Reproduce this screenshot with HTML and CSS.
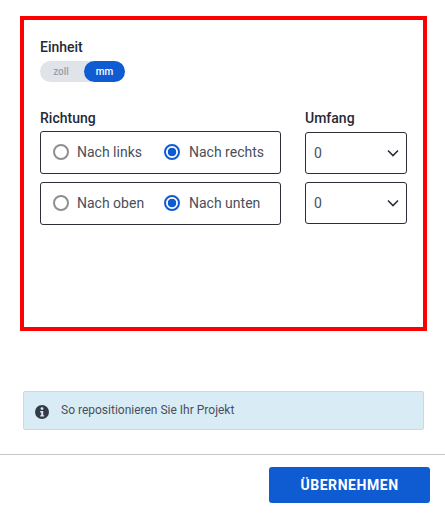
FILE: index.html
```html
<!DOCTYPE html>

<html lang="de">

<head>
  <meta charset="UTF-8">
  <meta name="viewport" content="width=device-width, initial-scale=1">

  <title>Repositionieren</title>

  <link rel="stylesheet" href="styles.css">
</head>

<body>
  <div class="panel">
    <div class="field-label">Einheit</div>
    <div class="unit-toggle">
      <span class="unit">zoll</span>
      <span class="unit active">mm</span>
    </div>

    <div class="columns">
      <div class="direction">
        <div class="field-label">Richtung</div>
        <div class="radio-box">
          <span class="radio"><span class="dot"></span>Nach links</span>
          <span class="radio checked"><span class="dot"></span>Nach rechts</span>
        </div>
        <div class="radio-box">
          <span class="radio"><span class="dot"></span>Nach oben</span>
          <span class="radio checked"><span class="dot"></span>Nach unten</span>
        </div>
      </div>
      <div class="extent">
        <div class="field-label">Umfang</div>
        <div class="select">0
          <svg width="12" height="8" viewBox="0 0 12 8"><path d="M1 1.5l5 5 5-5" fill="none" stroke="#2b2f38" stroke-width="1.6"/></svg>
        </div>
        <div class="select">0
          <svg width="12" height="8" viewBox="0 0 12 8"><path d="M1 1.5l5 5 5-5" fill="none" stroke="#2b2f38" stroke-width="1.6"/></svg>
        </div>
      </div>
    </div>
  </div>

  <div class="info">
    <svg class="info-icon" width="14" height="14" viewBox="0 0 14 14">
      <circle cx="7" cy="7" r="7" fill="#343a46"/>
      <circle cx="7" cy="3.6" r="1.4" fill="#d9ecf5"/>
      <path d="M5.2 6h3v4.2h1v1.4H5.2v-1.4h1V7.4h-1z" fill="#d9ecf5"/>
    </svg>
    <span class="info-text">So repositionieren Sie Ihr Projekt</span>
  </div>

  <div class="footer">
    <button type="button" class="apply">ÜBERNEHMEN</button>
  </div>
</body>

</html>
```

FILE: styles.css
```css
html {
  margin: 0;
  padding: 0;
}

body {
  margin: 0;
  background: #fff;
  font-family: Roboto, sans-serif;
  color: #2b2f38;
}

.panel {
  box-sizing: border-box;
  width: 407px;
  height: 315px;
  margin: 16px 0 0 20px;
  padding: 19px 16px;
  border: 4px solid #ff0000;
}

.field-label {
  font-size: 14px;
  font-weight: 500;
  line-height: 16px;
  color: #252a36;
}

.unit-toggle {
  display: flex;
  width: 85px;
  height: 21px;
  margin-top: 6px;
  border-radius: 11px;
  background: #e0e3e8;
}

.unit {
  flex: 1;
  padding-right: 2px;
  font-size: 10px;
  font-weight: 500;
  line-height: 21px;
  text-align: center;
  color: #9a9fa9;
}

.unit.active {
  flex: 0 0 41px;
  padding-right: 0;
  border-radius: 11px;
  background: #0f5bd2;
  color: #fff;
}

.columns {
  display: flex;
  gap: 24px;
  margin-top: 28px;
}

.direction {
  width: 241px;
}

.extent {
  width: 102px;
}

.radio-box {
  box-sizing: border-box;
  display: flex;
  align-items: center;
  height: 43px;
  margin-top: 5px;
  padding: 0 0 1px 12px;
  border: 1px solid #2b2f38;
  border-radius: 3px;
}

.radio-box + .radio-box {
  margin-top: 8px;
}

.radio {
  display: flex;
  align-items: center;
  gap: 8px;
  width: 111px;
  font-size: 14px;
  color: #4a4f5a;
}

.radio.checked {
  gap: 9px;
}

.dot {
  box-sizing: border-box;
  width: 16px;
  height: 16px;
  border: 2px solid #8f8f8f;
  border-radius: 50%;
}

.radio.checked .dot {
  border-color: #0f5bd2;
  background: radial-gradient(circle, #0f5bd2 0 4px, #fff 4.6px);
}

.select {
  box-sizing: border-box;
  display: flex;
  align-items: center;
  justify-content: space-between;
  height: 42px;
  margin-top: 6px;
  padding: 0 7px 1px 8px;
  border: 1px solid #2b2f38;
  border-radius: 3px;
  font-size: 14px;
  color: #4a4f5a;
}

.select + .select {
  margin-top: 8px;
}

.info {
  box-sizing: border-box;
  display: flex;
  align-items: center;
  gap: 12px;
  width: 401px;
  height: 39px;
  margin: 60px 0 0 23px;
  padding-left: 11px;
  border: 1px solid #c0dcee;
  border-radius: 2px;
  background: #d9ecf5;
  font-size: 12px;
  color: #4a4f5a;
}

.info-icon {
  margin-top: 2px;
}

.info-text {
  margin-top: -1px;
}

.footer {
  display: flex;
  justify-content: flex-end;
  margin-top: 24px;
  padding: 12px 15px 0 0;
  border-top: 1px solid #c8c8c8;
}

.apply {
  width: 161px;
  height: 36px;
  border: 0;
  border-radius: 3px;
  background: #0f5bd2;
  color: #fff;
  font-family: Roboto, sans-serif;
  font-size: 14px;
  font-weight: 700;
  letter-spacing: 0.55px;
}
```
